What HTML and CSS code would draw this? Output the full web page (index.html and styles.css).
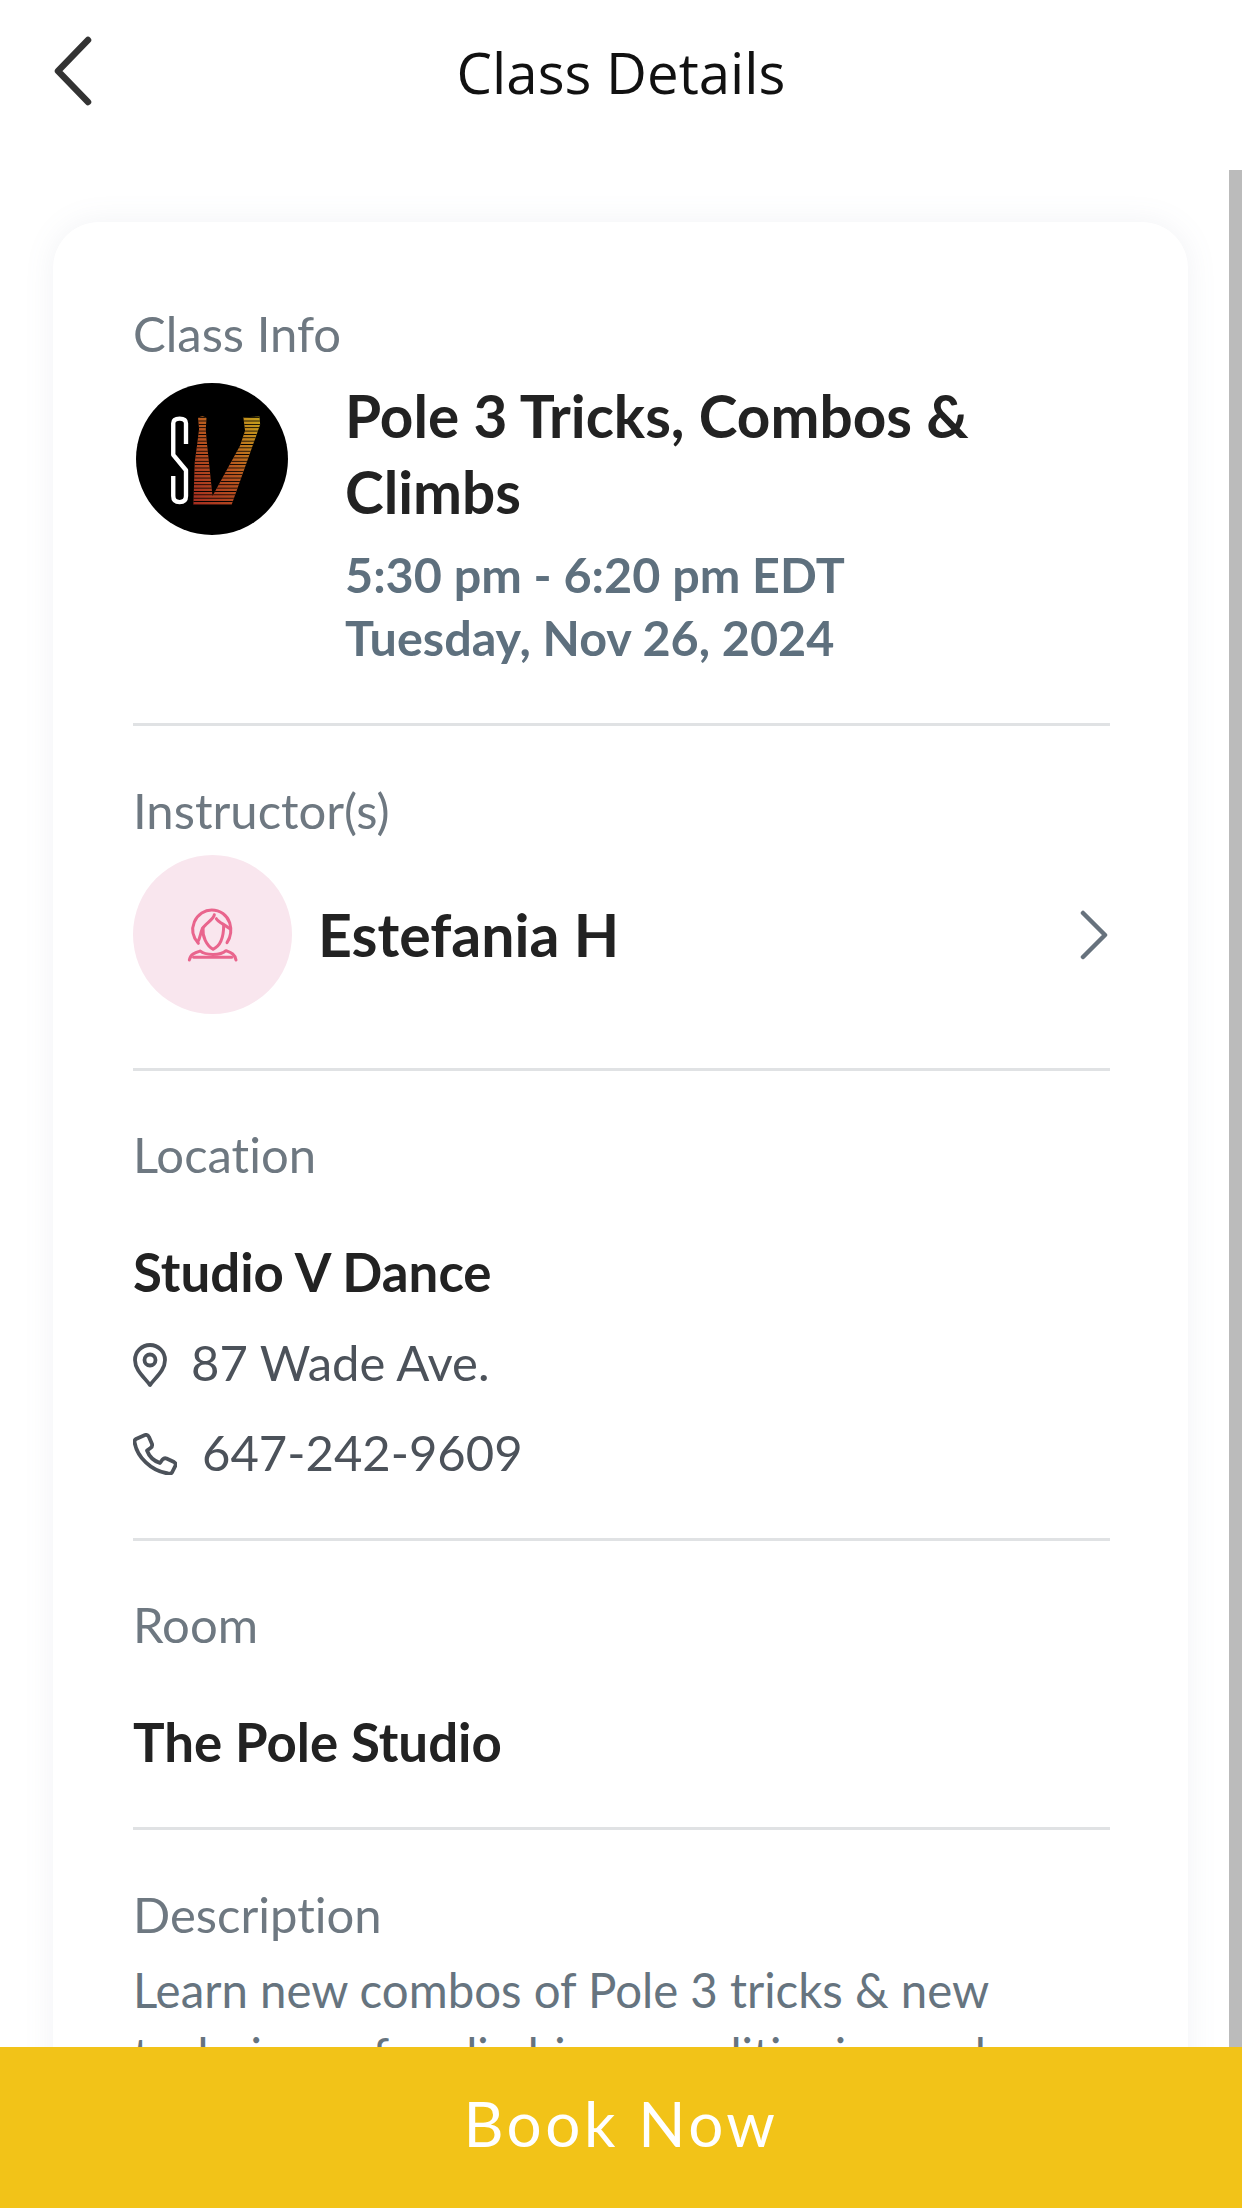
FILE: index.html
```html
<!DOCTYPE html>
<html lang="en">
<head>
<meta charset="utf-8">
<title>Class Details</title>
<link rel="stylesheet" href="styles.css">
</head>
<body>
<div class="screen">
  <header class="topbar">
    <svg class="back" viewBox="0 0 40 70" fill="none"><path d="M35 4 L5 35 L35 66" stroke="#333" stroke-width="6.500" stroke-linecap="round" stroke-linejoin="round"/></svg>
    <h1 class="title">Class Details</h1>
  </header>
  <main class="scroller">
    <section class="card">
      <div class="section section-info">
        <div class="label">Class Info</div>
        <div class="info-row">
          <svg class="logo" viewBox="50 68 453 453">
            <defs>
              <linearGradient id="vgrad" x1="0" y1="1" x2="1" y2="0">
                <stop offset="0" stop-color="#a52d20"/>
                <stop offset="0.5" stop-color="#b8561f"/>
                <stop offset="1" stop-color="#c6a41c"/>
              </linearGradient>
              <pattern id="stripes" width="10" height="10" patternUnits="userSpaceOnUse">
                <rect width="10" height="2.500" fill="#000"/>
              </pattern>
            </defs>
            <circle cx="276.500" cy="294.500" r="226.500" fill="#000"/>
            <path d="M199 250 V188 Q199 174 180 174 Q161 174 161 188 V282 L199 328 V405 Q199 423 180 423 Q161 423 161 405 V345" fill="none" stroke="#fff" stroke-width="13" stroke-linejoin="round"/>
            <path d="M235 172 Q248 162 260 172 L258 205 L260 235 L278 405 L360 255 L375 210 L370 170 L418 168 L420 192 L335 431 L221 431 L225 305 L233 245 L238 205 Z" fill="url(#vgrad)"/>
            <path d="M235 172 Q248 162 260 172 L258 205 L260 235 L278 405 L360 255 L375 210 L370 170 L418 168 L420 192 L335 431 L221 431 L225 305 L233 245 L238 205 Z" fill="url(#stripes)"/>
          </svg>
          <div class="info-text">
            <div class="class-name">Pole 3 Tricks, Combos &amp; Climbs</div>
            <div class="class-time">5:30 pm - 6:20 pm EDT</div>
            <div class="class-time">Tuesday, Nov 26, 2024</div>
          </div>
        </div>
      </div>
      <div class="section section-instructor">
        <div class="label">Instructor(s)</div>
        <div class="instructor-row">
          <div class="avatar">
            <svg class="avatar-icon" viewBox="0 0 180 210" fill="none" stroke="#e9658d" stroke-width="9" stroke-linecap="round" stroke-linejoin="round">
              <path d="M52 130 C36 112 30 90 40 66 C50 42 72 30 92 30 C118 30 138 46 146 68 C152 88 150 110 138 128"/>
              <path d="M100 44 C98 58 74 70 64 86 C58 100 58 114 50 126"/>
              <path d="M106 56 C112 66 128 72 146 86"/>
              <path d="M66 84 C64 110 76 136 96 148 C114 140 128 118 128 76"/>
              <path d="M25 180 C28 162 42 158 58 153 C72 166 118 168 135 152 C150 158 162 162 165 180"/>
              <path d="M38 172 H152"/>
            </svg>
          </div>
          <div class="instructor-name">Estefania H</div>
          <svg class="chevron" viewBox="0 0 28 50" fill="none"><path d="M3 3 L25 25 L3 47" stroke="#67727d" stroke-width="4.500" stroke-linecap="round" stroke-linejoin="round"/></svg>
        </div>
      </div>
      <div class="section section-location">
        <div class="label">Location</div>
        <div class="place">Studio V Dance</div>
        <div class="contact contact-address">
          <svg class="pin" viewBox="0 0 34 44" fill="none" stroke="#4c525a" stroke-width="3.800" stroke-linejoin="round"><path d="M17 42 C11 34 2 27 2 17 A15 15 0 0 1 32 17 C32 27 23 34 17 42 Z"/><circle cx="17" cy="17" r="5.500"/></svg>
          <span>87 Wade Ave.</span>
        </div>
        <div class="contact contact-phone">
          <svg class="phone" viewBox="0 0 44 42" fill="none" stroke="#4c525a" stroke-width="3.800" stroke-linejoin="round" stroke-linecap="round"><path d="M3 6 L12 2 C14 1.500 15 2 16 4 L19 11 C19.500 13 19 14 17.500 15 L14 17.500 C16 23 21 28 27 30 L29.500 26.500 C31 25 32 25 33.500 25.500 L41 29 C42.500 30 43 31 42.500 32.500 L39 39.500 C38 41 37 41 35 40.500 C18 38 4 24 1.500 9 C1.500 7.500 2 6.500 3 6 Z"/></svg>
          <span>647-242-9609</span>
        </div>
      </div>
      <div class="section section-room">
        <div class="label">Room</div>
        <div class="place">The Pole Studio</div>
      </div>
      <div class="section section-description">
        <div class="label">Description</div>
        <p class="description">Learn new combos of Pole 3 tricks &amp; new techniques for climbing, conditioning and strength.</p>
      </div>
    </section>
  </main>
  <div class="scrollbar"></div>
  <button class="book" type="button">Book Now</button>
</div>
</body>
</html>
```
FILE: styles.css
```css
* { box-sizing: border-box; }
html, body { margin: 0; padding: 0; background: #fff; }
.screen {
  position: relative;
  width: 1242px;
  height: 2208px;
  overflow: hidden;
  background: #fff;
  font-family: "Lato", "Noto Sans", sans-serif;
  font-variant-ligatures: none;
}
.topbar {
  height: 170px;
  display: flex;
  align-items: center;
  justify-content: center;
  position: relative;
}
.back {
  position: absolute;
  left: 53px;
  top: 36px;
  width: 40px;
  height: 70px;
}
.title {
  margin: -25px 0 0;
  font-family: "Open Sans", sans-serif;
  font-weight: 400;
  font-size: 56.400px;
  line-height: 72px;
  color: #111;
}
.scroller {
  padding: 52px 54px 0 53px;
}
.card {
  background: #fff;
  border-radius: 46px;
  box-shadow: 0 0 30px rgba(120, 125, 160, 0.1);
  padding: 0 78px 0 80px;
  height: 2200px;
}
.section { border-bottom: 3px solid #e0e2e4; }
.section-info { padding: 81px 0 54px; }
.section-instructor { padding: 54px 0 54px; }
.section-location { padding: 53px 0 56px; }
.section-room { padding: 53px 0 55px; }
.section-description { padding: 54px 0 0; border-bottom: 0; }
.label {
  font-size: 49px;
  line-height: 60px;
  color: #6e7881;
}
.info-row {
  display: flex;
  gap: 57px;
  align-items: flex-start;
  padding-top: 14px;
}
.logo {
  width: 152px;
  height: 152px;
  margin: 6px 0 0 3px;
  flex: none;
}
.class-name {
  font-size: 58.500px;
  font-weight: 700;
  line-height: 76px;
  color: #222;
  margin-bottom: 14px;
}
.class-time {
  font-size: 48.500px;
  font-weight: 700;
  line-height: 63px;
  color: #5e707e;
}
.instructor-row {
  display: flex;
  align-items: center;
  margin-top: 15px;
}
.avatar {
  width: 159px;
  height: 159px;
  border-radius: 50%;
  background: #f9e6ee;
  display: flex;
  align-items: center;
  justify-content: center;
  flex: none;
}
.avatar-icon { width: 60px; height: 70px; margin-right: 4px; }
.instructor-name {
  flex: 1;
  margin-left: 26px;
  font-size: 59px;
  font-weight: 700;
  color: #222;
}
.chevron { width: 28px; height: 50px; margin-right: 2px; }
.place {
  font-size: 52.800px;
  font-weight: 700;
  line-height: 60px;
  color: #222;
  margin-top: 58px;
}
.contact {
  display: flex;
  align-items: center;
  font-size: 49px;
  line-height: 60px;
  color: #4c525a;
}
.contact-address { margin-top: 30px; gap: 24px; }
.contact-phone { margin-top: 30px; gap: 25px; }
.pin { width: 34px; height: 44px; flex: none; margin-top: 6px; }
.phone { width: 44px; height: 42px; flex: none; margin-top: 4px; }
.description {
  margin: 13px 0 0;
  font-size: 47.400px;
  line-height: 65px;
  color: #66747f;
}
.scrollbar {
  position: absolute;
  right: 0;
  top: 170px;
  width: 13px;
  bottom: 161px;
  background: #bbbbbb;
}
.book {
  position: absolute;
  left: 0;
  right: 0;
  bottom: 0;
  height: 161px;
  width: 100%;
  border: 0;
  padding: 0 0 10px;
  background: #f2c318;
  color: #fff;
  font-family: "Lato", sans-serif;
  font-size: 62px;
  font-weight: 400;
  letter-spacing: 3.500px;
}
```
